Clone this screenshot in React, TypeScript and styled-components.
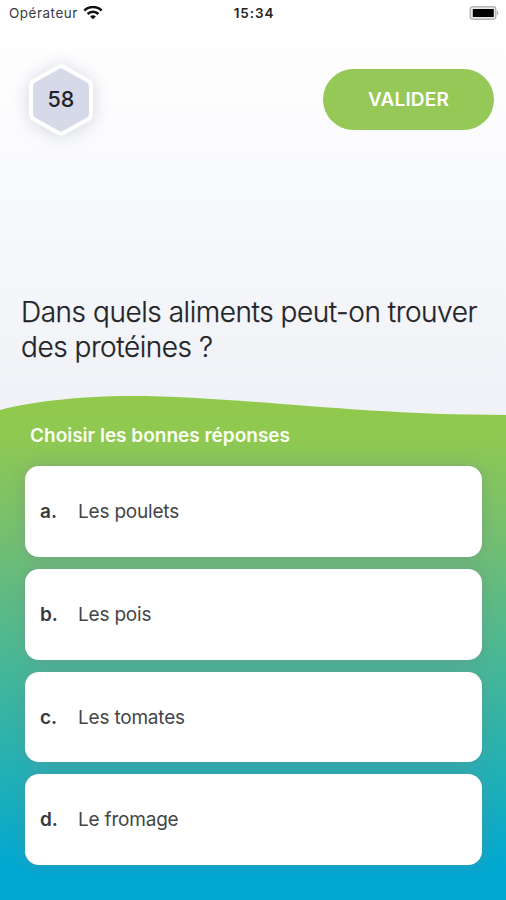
import React from 'react';
import styled, { createGlobalStyle } from 'styled-components';

const GlobalStyle = createGlobalStyle`
  * { box-sizing: border-box; }
  body { margin: 0; font-family: Inter, "Liberation Sans", sans-serif; color: #232428; }
`;

const Screen = styled.main`
  width: 506px;
  height: 900px;
  display: flex;
  flex-direction: column;
  overflow: hidden;
  background: linear-gradient(#ffffff 0px, #fdfdfe 90px, #f9fafd 170px, #f1f2f7 400px);
`;

const StatusBar = styled.header`
  height: 26px;
  padding: 0 7px 0 9px;
  display: grid;
  grid-template-columns: 1fr auto 1fr;
  align-items: center;
`;

const Carrier = styled.div`
  display: flex;
  align-items: center;
  gap: 5px;
  font-size: 13.5px;
  letter-spacing: 0.5px;
  color: #3c3c3f;
`;

const Clock = styled.time`
  font-size: 13.5px;
  font-weight: 600;
  letter-spacing: 0.9px;
  color: #252528;
`;

const BatterySlot = styled.div`
  display: flex;
  justify-content: flex-end;
`;

const TopRow = styled.div`
  height: 61px;
  margin-top: 43px;
  padding: 0 12px 0 22px;
  display: flex;
  align-items: center;
  justify-content: space-between;
`;

const Timer = styled.div`
  width: 78px;
  height: 82px;
  display: grid;
  place-items: center;
  & > * { grid-area: 1 / 1; }
`;

const Hexagon = styled.svg`
  overflow: visible;
  filter: drop-shadow(0 1px 9px rgba(72, 88, 125, 0.23));
`;

const Seconds = styled.span`
  z-index: 1;
  font-size: 21.5px;
  font-weight: 500;
  line-height: 26px;
  padding-bottom: 1px;
`;

const ValidateButton = styled.button`
  width: 171px;
  height: 61px;
  border: 0;
  padding: 1px 0 0;
  border-radius: 31px;
  background: #95c857;
  color: #fff;
  font: 600 19px/24px Inter, sans-serif;
  letter-spacing: 0.15px;
`;

const Question = styled.h1`
  height: 70px;
  margin: 165px 0 0 21px;
  font-size: 28px;
  font-weight: 300;
  line-height: 35px;
  letter-spacing: -0.46px;
  white-space: nowrap;
  -webkit-text-stroke: 0.25px #232428;
`;

const Panel = styled.section`
  flex: 1;
  margin-top: 31px;
  padding: 29px 24px 0 25px;
  background: linear-gradient(#90c94b 0px, #90c951 38px, #72be72 145px, #47b796 270px, #22b0b5 375px, #00a8d2 475px);
  clip-path: path("M0 14 C35 5 83 0 130 0 C240 0 350 19 506 19 V504 H0 Z");
`;

const Instruction = styled.h2`
  margin: 0 0 0 5px;
  height: 41.3px;
  font-size: 19px;
  font-weight: 600;
  line-height: 22px;
  color: #fbfff2;
  white-space: nowrap;
`;

const Answers = styled.div`
  display: flex;
  flex-direction: column;
  gap: 12px;
`;

const Answer = styled.button`
  height: 90.7px;
  display: grid;
  grid-template-columns: 38px 1fr;
  align-items: center;
  padding: 0 15px;
  border: 0;
  border-radius: 14px;
  background: #fff;
  box-shadow: 0 0 14px rgba(125, 132, 140, 0.42);
  font-family: inherit;
  font-size: 19px;
  text-align: left;
  color: #38393d;
`;

const Letter = styled.span`
  font-weight: 600;
`;

const Label = styled.span`
  font-weight: 400;
  letter-spacing: -0.2px;
  color: #444549;
`;

const answers = [
  ['a.', 'Les poulets'],
  ['b.', 'Les pois'],
  ['c.', 'Les tomates'],
  ['d.', 'Le fromage'],
];

const Wifi = () => (
  <svg width="20" height="14" viewBox="0 0 20 14" fill="none" stroke="#111" strokeWidth="2.5">
    <path d="M1.3 4.5C6.2-.2 13.8-.2 18.7 4.5" />
    <path d="M4.6 8C7.6 5 12.4 5 15.4 8" />
    <path d="M10 13.2 7.1 10.5Q10 8.2 12.9 10.5Z" fill="#111" stroke="none" />
  </svg>
);

const Battery = () => (
  <svg width="30" height="14" viewBox="0 0 30 14">
    <rect x="1.2" y="0.8" width="25.6" height="12.4" rx="2.6" fill="#e9e9e9" stroke="#b5b5b5" strokeWidth="1.4" />
    <rect x="3.8" y="3" width="21" height="8" rx="0.5" fill="#000" />
    <path d="M28 4.5Q30.5 7 28 9.5Z" fill="#aaa" />
  </svg>
);

export default function App() {
  return (
    <Screen>
      <GlobalStyle />
      <StatusBar>
        <Carrier>Opérateur <Wifi /></Carrier>
        <Clock>15:34</Clock>
        <BatterySlot><Battery /></BatterySlot>
      </StatusBar>
      <TopRow>
        <Timer>
          <Hexagon width="64" height="72" viewBox="0 0 64 72">
            <path
              d="M29 3.2Q32 1.5 35 3.2L59 16.8Q62 18.5 62 22V50Q62 53.5 59 55.2L35 68.8Q32 70.5 29 68.8L5 55.2Q2 53.5 2 50V22Q2 18.5 5 16.8Z"
              fill="#d5d9e8"
              stroke="#fff"
              strokeWidth="4"
            />
          </Hexagon>
          <Seconds>58</Seconds>
        </Timer>
        <ValidateButton>VALIDER</ValidateButton>
      </TopRow>
      <Question>Dans quels aliments peut-on trouver<br />des protéines ?</Question>
      <Panel>
        <Instruction>Choisir les bonnes réponses</Instruction>
        <Answers>
          {answers.map(([letter, label]) => (
            <Answer key={letter}>
              <Letter>{letter}</Letter>
              <Label>{label}</Label>
            </Answer>
          ))}
        </Answers>
      </Panel>
    </Screen>
  );
}
